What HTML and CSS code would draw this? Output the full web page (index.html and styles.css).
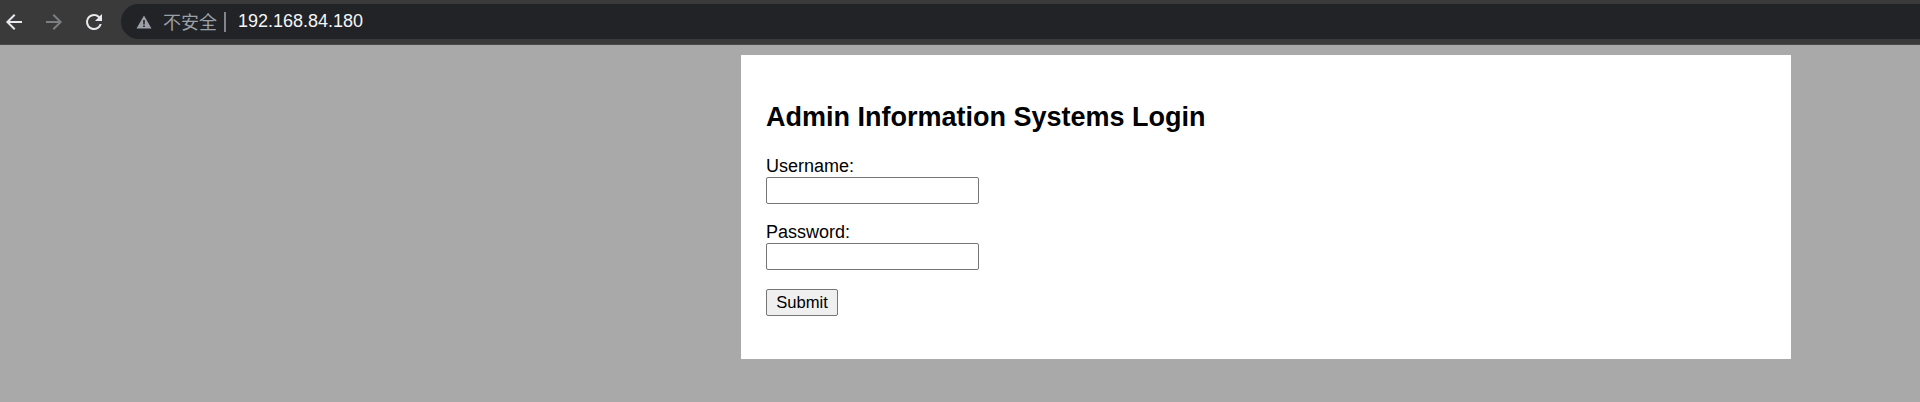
FILE: index.html
```html
<!DOCTYPE html>
<html lang="zh">
<head>
<meta charset="utf-8">
<title>Admin Information Systems Login</title>
<link rel="stylesheet" href="styles.css">
</head>
<body>
<header class="toolbar">
  <svg class="nav-icon" viewBox="0 0 24 24"><path d="M20 11H7.83l5.59-5.59L12 4l-8 8 8 8 1.41-1.41L7.83 13H20z" fill="#e8eaed"/></svg>
  <svg class="nav-icon" viewBox="0 0 24 24"><path d="M4 11h12.17l-5.59-5.59L12 4l8 8-8 8-1.41-1.41L16.17 13H4z" fill="#7d7e80"/></svg>
  <svg class="nav-icon" viewBox="0 0 24 24"><path d="M17.65 6.35A7.96 7.96 0 0 0 12 4a8 8 0 1 0 7.73 10h-2.08A6 6 0 1 1 12 6c1.66 0 3.14.69 4.22 1.78L13 11h7V4z" fill="#e8eaed"/></svg>
  <div class="omnibox">
    <svg class="warn" viewBox="0 0 16 16"><path d="M8 1.5 15.5 14.5H.5zM7.2 6v4.5h1.6V6zm0 5.6v1.5h1.6v-1.5z" fill="#9aa0a6" fill-rule="evenodd"/></svg>
    <span class="insecure">不安全</span>
    <span class="divider"></span>
    <span class="url">192.168.84.180</span>
  </div>
</header>
<main class="page">
  <section class="card">
    <h2 class="title">Admin Information Systems Login</h2>
    <form class="form">
      <div class="field">
        <label class="label" for="username">Username:</label>
        <input class="input" id="username" type="text">
      </div>
      <div class="field">
        <label class="label" for="password">Password:</label>
        <input class="input" id="password" type="password">
      </div>
      <button class="submit" type="button">Submit</button>
    </form>
  </section>
</main>
</body>
</html>
```
FILE: styles.css
```css
* { box-sizing: border-box; }
html, body { margin: 0; height: 100%; overflow: hidden; }
body { background: #a9a9a9; font-family: "Liberation Sans", Arial, sans-serif; color: #000; }

.toolbar {
  height: 45px;
  background: #3a3a3a;
  border-bottom: 1px solid #4a4a4a;
  display: flex;
  align-items: center;
  padding: 0 0 1px 2px;
}
.nav-icon { width: 24px; height: 24px; margin-right: 16px; flex: none; }
.nav-icon:nth-of-type(3) { margin-right: 15px; }
.omnibox {
  flex: 1;
  height: 35px;
  background: #222326;
  border-radius: 18px 0 0 18px;
  display: flex;
  align-items: center;
  padding-left: 15px;
}
.warn { width: 16px; height: 16px; flex: none; margin-right: 11px; }
.insecure { font: 18px "Noto Sans CJK SC", "Liberation Sans", sans-serif; color: #9aa0a6; margin-bottom: 2px; }
.divider { width: 2px; height: 20px; background: #80868b; margin: 0 12px 0 7px; }
.url { font-size: 18px; color: #f4f5f6; }

.page { padding: 10px 129px 0 741px; }
.card { background: #fff; height: 304px; padding: 25px; }
.title { margin: 22px 0 0; font-size: 27px; line-height: 31px; font-weight: bold; }
.form { margin-top: 24px; display: flex; flex-direction: column; align-items: flex-start; }
.field { display: flex; flex-direction: column; align-items: flex-start; margin-bottom: 19px; }
.label { font-size: 18px; line-height: 18px; margin-bottom: 2px; }
.input { width: 213px; height: 27px; border: 1px solid #767676; border-radius: 2px; background: #fff; padding: 1px 2px; }
.submit { width: 72px; height: 27px; border: 1px solid #767676; border-radius: 2px; background: #efefef; font: 16.6px "Liberation Sans", Arial, sans-serif; color: #000; padding: 0; }
```
